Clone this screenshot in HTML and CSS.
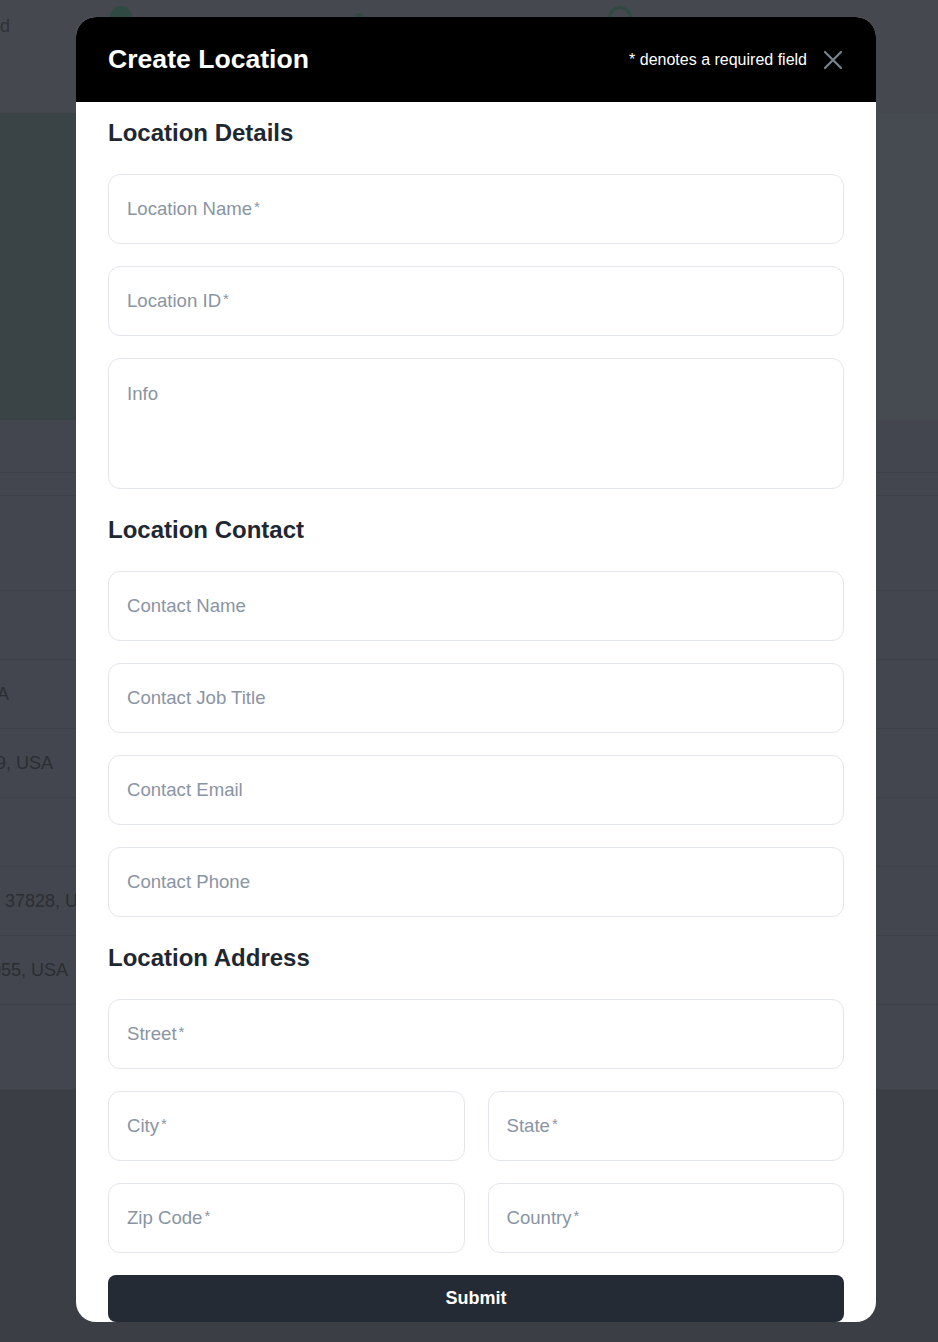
FILE: index.html
```html
<!DOCTYPE html>
<html lang="en">
<head>
<meta charset="utf-8">
<title>Create Location</title>
<link rel="stylesheet" href="styles.css">
</head>
<body>
<div class="page">
  <div class="topbar">
    <span class="crumb">Saved</span>
    <div class="steps">
      <span class="step step-done"></span>
      <span class="step step-dot"></span>
      <span class="step step-ring"></span>
    </div>
  </div>
  <div class="hero">
    <div class="hero-panel"></div>
  </div>
  <div class="toolbar">
    <div class="tb-line"></div>
    <div class="tb-line"></div>
  </div>
  <div class="table">
    <div class="trow"></div>
    <div class="trow"><span class="cell c1">Nashville, TN 37203, USA</span></div>
    <div class="trow"><span class="cell c2">Memphis, TN 38119, USA</span></div>
    <div class="trow"></div>
    <div class="trow"><span class="cell c3">37828, USA</span></div>
    <div class="trow"><span class="cell c4">Franklin, TN 37055, USA</span></div>
    <div class="trow trow-last"></div>
  </div>
  <div class="footer"></div>
</div>

<div class="modal">
  <div class="modal-head">
    <h1>Create Location</h1>
    <div class="head-right">
      <span class="req-note">* denotes a required field</span>
      <button class="close" aria-label="Close">
        <svg width="20" height="20" viewBox="0 0 20 20"><path d="M2 2 L18 18 M18 2 L2 18" stroke="#7b838d" stroke-width="2.2" stroke-linecap="round" fill="none"/></svg>
      </button>
    </div>
  </div>
  <form class="modal-body">
    <h2>Location Details</h2>
    <label class="field"><span class="ph">Location Name<sup>*</sup></span></label>
    <label class="field"><span class="ph">Location ID<sup>*</sup></span></label>
    <label class="field field-area"><span class="ph">Info</span></label>

    <h2>Location Contact</h2>
    <label class="field"><span class="ph">Contact Name</span></label>
    <label class="field"><span class="ph">Contact Job Title</span></label>
    <label class="field"><span class="ph">Contact Email</span></label>
    <label class="field"><span class="ph">Contact Phone</span></label>

    <h2>Location Address</h2>
    <label class="field"><span class="ph">Street<sup>*</sup></span></label>
    <div class="pair">
      <label class="field"><span class="ph">City<sup>*</sup></span></label>
      <label class="field"><span class="ph">State<sup>*</sup></span></label>
    </div>
    <div class="pair">
      <label class="field"><span class="ph">Zip Code<sup>*</sup></span></label>
      <label class="field"><span class="ph">Country<sup>*</sup></span></label>
    </div>
    <button type="button" class="submit">Submit</button>
  </form>
</div>
</body>
</html>
```
FILE: styles.css
```css
* { box-sizing: border-box; }
html, body { margin: 0; padding: 0; }
body {
  font-family: "Liberation Sans", Arial, sans-serif;
  background: #3c3e45;
  width: 938px;
  height: 1342px;
  overflow: hidden;
  position: relative;
}

/* ---------- dimmed background page ---------- */
.page { width: 938px; }
.topbar {
  height: 113px;
  background: #45484f;
  position: relative;
  display: flex;
}
.crumb {
  display: block;
  width: 10px;
  overflow: hidden;
  direction: rtl;
  white-space: nowrap;
  color: #2e3137;
  font-size: 18px;
  padding-top: 16px;
}
.steps {
  position: absolute;
  top: 6px;
  left: 108px;
  display: flex;
}
.step { display: block; border-radius: 50%; }
.step-done { width: 22px; height: 22px; background: #2f4a42; margin-left: 2px; }
.step-dot { width: 8px; height: 8px; background: #2f4a42; margin-left: 223px; margin-top: 7px; }
.step-ring { width: 24px; height: 24px; border: 3px solid #2f4a42; margin-left: 245px; }

.hero {
  height: 307px;
  background: #464a51;
  display: flex;
}
.hero-panel { width: 300px; background: #3a4345; }

.toolbar {
  height: 170px;
  background: #43464e;
  padding-top: 52px;
}
.tb-line { height: 1px; background: #3e4148; margin-bottom: 22px; }
.tb-line + .tb-line { margin-bottom: 0; }

.table { background: #43464e; }
.trow {
  height: 69px;
  border-top: 1px solid #3e4148;
  display: flex;
  align-items: center;
  overflow: hidden;
}
.trow-last { height: 86px; border-bottom: 1px solid #3e4148; }
.cell {
  display: flex;
  justify-content: flex-end;
  white-space: nowrap;
  color: #2b2e34;
  font-size: 18px;
  flex: none;
}
.c1 { width: 9px; }
.c2 { width: 53px; }
.c3 { margin-left: 5px; }
.c4 { width: 68px; }
.footer { height: 260px; background: #3c3e45; }

/* ---------- modal ---------- */
.modal {
  position: absolute;
  top: 17px;
  left: 76px;
  width: 800px;
  height: 1305px;
  background: #fff;
  border-radius: 20px;
  overflow: hidden;
}
.modal-head {
  height: 85px;
  background: #000;
  display: flex;
  align-items: center;
  justify-content: space-between;
  padding: 0 32px;
}
.modal-head h1 {
  margin: 0;
  color: #fff;
  font-size: 26.6px;
  font-weight: 700;
}
.head-right { display: flex; align-items: center; gap: 15px; }
.req-note { color: #fff; font-size: 16px; }
.close {
  background: none;
  border: 0;
  padding: 0;
  width: 22px;
  height: 22px;
  display: flex;
  align-items: center;
  justify-content: center;
}

.modal-body {
  padding: 12px 32px 0;
  display: flex;
  flex-direction: column;
  gap: 22px;
}
.modal-body h2 {
  margin: 0;
  height: 38px;
  line-height: 38px;
  font-size: 24px;
  font-weight: 700;
  color: #212731;
}
.field {
  display: flex;
  align-items: center;
  height: 70px;
  border: 1px solid #e3e6ea;
  border-radius: 12px;
  padding: 0 18px;
  background: #fff;
}
.field-area { height: 131px; align-items: flex-start; padding-top: 24px; }
.ph {
  color: #8a94a3;
  font-size: 18.6px;
  white-space: nowrap;
}
.ph sup {
  font-size: 15px;
  vertical-align: 3px;
  margin-left: 2px;
}
.pair {
  display: grid;
  grid-template-columns: 1fr 1fr;
  gap: 23px;
}
.submit {
  height: 47px;
  border: 0;
  border-radius: 8px;
  background: #252b34;
  color: #fff;
  font-family: "Liberation Sans", Arial, sans-serif;
  font-size: 18px;
  font-weight: 700;
}
```
